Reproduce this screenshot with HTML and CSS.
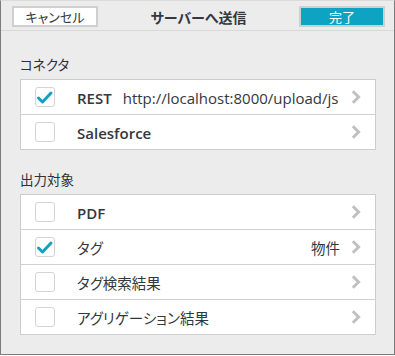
FILE: index.html
```html
<!DOCTYPE html>
<html lang="ja">
<head>
<meta charset="utf-8">
<title>サーバーへ送信</title>
<link rel="stylesheet" href="styles.css">
</head>
<body>
<div class="window">
  <header class="header">
    <button class="btn btn-cancel">キャンセル</button>
    <div class="title">サーバーへ送信</div>
    <button class="btn btn-done">完了</button>
  </header>

  <section class="section section-first">
    <div class="section-label">コネクタ</div>
    <ul class="list">
      <li class="row">
        <span class="check checked"><svg viewBox="0 0 20 20" width="20" height="20"><polyline points="3.5,11 7.5,15 16,6" fill="none" stroke="#159fc1" stroke-width="3" stroke-linecap="round" stroke-linejoin="round"/></svg></span>
        <span class="label"><b>REST</b><span class="url">http://localhost:8000/upload/js</span></span>
        <svg class="chev" viewBox="0 0 10 14" width="10" height="14"><polyline points="1.8,1.3 7.6,7 1.8,12.7" fill="none" stroke="#c0c0c0" stroke-width="3"/></svg>
      </li>
      <li class="row">
        <span class="check"></span>
        <span class="label"><b>Salesforce</b></span>
        <svg class="chev" viewBox="0 0 10 14" width="10" height="14"><polyline points="1.8,1.3 7.6,7 1.8,12.7" fill="none" stroke="#c0c0c0" stroke-width="3"/></svg>
      </li>
    </ul>
  </section>

  <section class="section section-second">
    <div class="section-label">出力対象</div>
    <ul class="list">
      <li class="row">
        <span class="check"></span>
        <span class="label"><b>PDF</b></span>
        <svg class="chev" viewBox="0 0 10 14" width="10" height="14"><polyline points="1.8,1.3 7.6,7 1.8,12.7" fill="none" stroke="#c0c0c0" stroke-width="3"/></svg>
      </li>
      <li class="row">
        <span class="check checked"><svg viewBox="0 0 20 20" width="20" height="20"><polyline points="3.5,11 7.5,15 16,6" fill="none" stroke="#159fc1" stroke-width="3" stroke-linecap="round" stroke-linejoin="round"/></svg></span>
        <span class="label">タグ</span>
        <span class="value">物件</span>
        <svg class="chev" viewBox="0 0 10 14" width="10" height="14"><polyline points="1.8,1.3 7.6,7 1.8,12.7" fill="none" stroke="#c0c0c0" stroke-width="3"/></svg>
      </li>
      <li class="row">
        <span class="check"></span>
        <span class="label">タグ検索結果</span>
        <svg class="chev" viewBox="0 0 10 14" width="10" height="14"><polyline points="1.8,1.3 7.6,7 1.8,12.7" fill="none" stroke="#c0c0c0" stroke-width="3"/></svg>
      </li>
      <li class="row">
        <span class="check"></span>
        <span class="label">アグリゲーション結果</span>
        <svg class="chev" viewBox="0 0 10 14" width="10" height="14"><polyline points="1.8,1.3 7.6,7 1.8,12.7" fill="none" stroke="#c0c0c0" stroke-width="3"/></svg>
      </li>
    </ul>
  </section>
</div>
</body>
</html>
```

FILE: styles.css
```css
* { box-sizing: border-box; }

html, body {
  margin: 0;
  padding: 0;
  background: #ffffff;
}

body {
  font-family: "Open Sans", "Noto Sans CJK JP", sans-serif;
  font-feature-settings: "palt";
  color: #33373e;
}

.window {
  width: 395px;
  height: 355px;
  background: #ececec;
  border-left: 1px solid #7c7c7c;
  border-right: 1px solid #7c7c7c;
  border-bottom: 1px solid #7c7c7c;
  border-top: 1px solid #dcdcdc;
}

.header {
  height: 30px;
  display: flex;
  align-items: flex-start;
  justify-content: space-between;
  padding: 5px 9px 0 11px;
  border-bottom: 1px solid #d8d8d8;
}

.btn {
  width: 86px;
  height: 21px;
  margin: 0;
  padding: 0;
  border: 2px solid #cfcfcf;
  font-family: "Noto Sans CJK JP", sans-serif;
  font-feature-settings: "palt";
  font-size: 13px;
  line-height: 17px;
  cursor: pointer;
}

.btn-cancel {
  background: #ffffff;
  color: #33373e;
}

.btn-done {
  background: #0fa3c3;
  color: #ffffff;
}

.title {
  font-family: "Noto Sans CJK JP", sans-serif;
  font-weight: bold;
  font-size: 14px;
  line-height: 22px;
  color: #33373e;
}

.section {
  margin: 0 18px 0 19px;
}

.section-first { margin-top: 23px; }
.section-second { margin-top: 19px; }

.section-label {
  font-family: "Noto Sans CJK JP", sans-serif;
  font-size: 13.5px;
  line-height: 20px;
  margin-bottom: 5px;
  color: #2e3136;
}

.list {
  list-style: none;
  margin: 0;
  padding: 0;
  background: #ffffff;
  border: 1px solid #cdcdcd;
}

.row {
  height: 35px;
  display: flex;
  align-items: center;
  padding: 0 14px 0 14px;
  border-top: 1px solid #d0d0d0;
  font-size: 14px;
}

.row:first-child {
  height: 34px;
  border-top: none;
}

.check {
  flex: none;
  width: 20px;
  height: 20px;
  border: 1px solid #d4d4d4;
  border-radius: 3px;
  background: #fff;
  position: relative;
}

.check svg {
  position: absolute;
  left: -1px;
  top: -1px;
}

.label {
  flex: 1;
  margin-left: 22px;
  white-space: nowrap;
  overflow: hidden;
  font-family: "Noto Sans CJK JP", sans-serif;
  font-size: 14.5px;
}

.label b {
  font-family: "Open Sans", sans-serif;
  font-weight: 600;
  font-size: 15px;
}

.url {
  margin-left: 11px;
  font-family: "Open Sans", sans-serif;
  font-weight: 400;
  font-size: 15px;
}

.value {
  margin-right: 11px;
  font-family: "Noto Sans CJK JP", sans-serif;
  font-size: 14.5px;
}

.chev {
  flex: none;
  display: block;
}
```
